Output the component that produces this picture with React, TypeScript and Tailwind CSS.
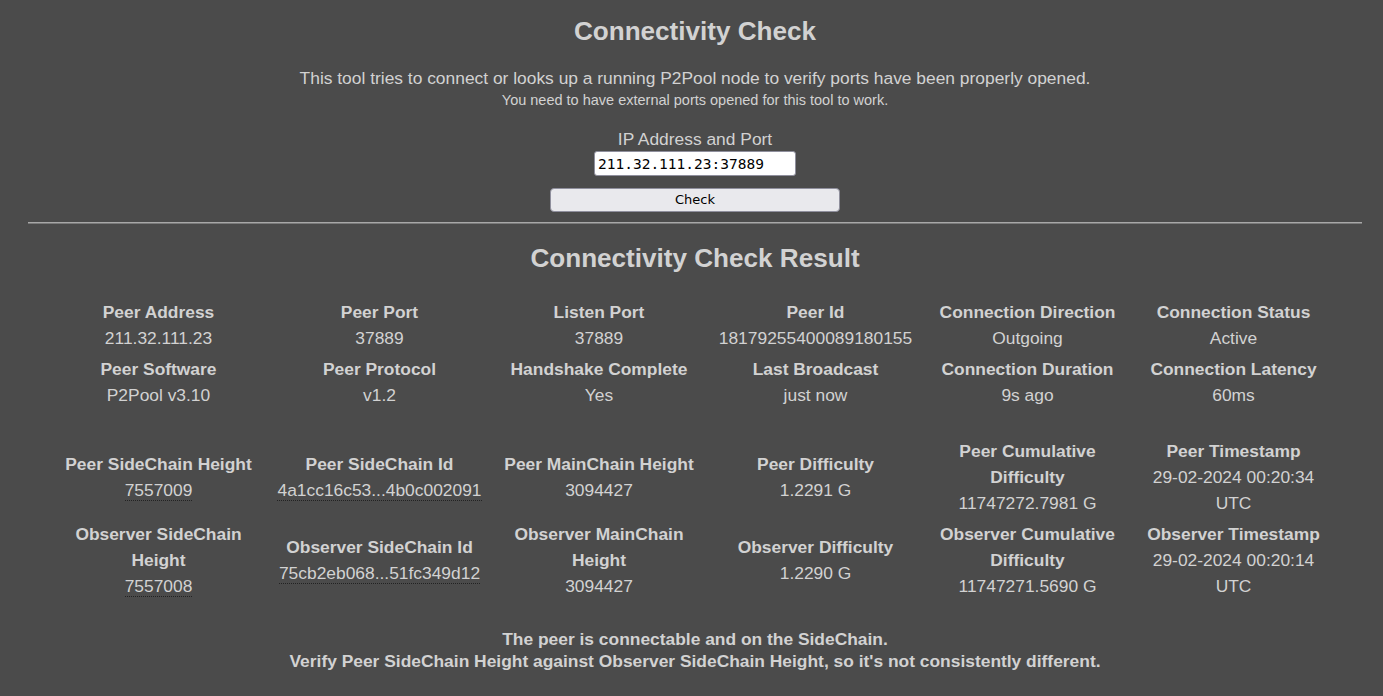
import React from "react";

type Cell = { label: string; value: string; dotted?: boolean };

const rows: Cell[][] = [
  [
    { label: "Peer Address", value: "211.32.111.23" },
    { label: "Peer Port", value: "37889" },
    { label: "Listen Port", value: "37889" },
    { label: "Peer Id", value: "18179255400089180155" },
    { label: "Connection Direction", value: "Outgoing" },
    { label: "Connection Status", value: "Active" },
  ],
  [
    { label: "Peer Software", value: "P2Pool v3.10" },
    { label: "Peer Protocol", value: "v1.2" },
    { label: "Handshake Complete", value: "Yes" },
    { label: "Last Broadcast", value: "just now" },
    { label: "Connection Duration", value: "9s ago" },
    { label: "Connection Latency", value: "60ms" },
  ],
  [
    { label: "Peer SideChain Height", value: "7557009", dotted: true },
    { label: "Peer SideChain Id", value: "4a1cc16c53...4b0c002091", dotted: true },
    { label: "Peer MainChain Height", value: "3094427" },
    { label: "Peer Difficulty", value: "1.2291 G" },
    { label: "Peer Cumulative Difficulty", value: "11747272.7981 G" },
    { label: "Peer Timestamp", value: "29-02-2024 00:20:34 UTC" },
  ],
  [
    { label: "Observer SideChain Height", value: "7557008", dotted: true },
    { label: "Observer SideChain Id", value: "75cb2eb068...51fc349d12", dotted: true },
    { label: "Observer MainChain Height", value: "3094427" },
    { label: "Observer Difficulty", value: "1.2290 G" },
    { label: "Observer Cumulative Difficulty", value: "11747271.5690 G" },
    { label: "Observer Timestamp", value: "29-02-2024 00:20:14 UTC" },
  ],
];

function CellView({ c }: { c: Cell }) {
  return (
    <div className="flex flex-col justify-center items-center text-center px-1 leading-[26px]">
      <div className="font-bold">{c.label}</div>
      <div>
        {c.dotted ? (
          <span className="border-b border-dotted border-[#222222]">{c.value}</span>
        ) : (
          c.value
        )}
      </div>
    </div>
  );
}

export default function App() {
  return (
    <div
      className="min-h-[696px] bg-[#4b4b4b] text-[#d2d2d2] text-[17.4px] overflow-hidden"
      style={{ fontFamily: '"Liberation Sans", Arial, sans-serif' }}
    >
      <div className="ml-[28px] mr-[21px]">
        <h1 className="pt-[16px] text-center font-bold text-[26.1px] leading-[30px]">
          Connectivity Check
        </h1>
        <p className="mt-[21px] text-center leading-[22px]">
          This tool tries to connect or looks up a running P2Pool node to verify ports have been properly opened.
        </p>
        <p className="text-center text-[14.5px] leading-[22px]">
          You need to have external ports opened for this tool to work.
        </p>
        <div className="mt-[17px] flex flex-col items-center">
          <label className="leading-[22px]">IP Address and Port</label>
          <input
            readOnly
            value="211.32.111.23:37889"
            className="mt-[1px] w-[202px] h-[25px] bg-white border border-[#8f8f9d] rounded-[3px] pl-[3px] text-black text-[14.5px] outline-none"
            style={{ fontFamily: '"DejaVu Sans Mono", "Liberation Mono", monospace' }}
          />
          <button
            className="mt-[12px] w-[290px] h-[24px] bg-[#e9e9ed] border border-[#8f8f9d] rounded-[4px] text-black text-[13px] leading-[20px]"
            style={{ fontFamily: '"DejaVu Sans", sans-serif' }}
          >
            Check
          </button>
        </div>
        <div className="mt-[10px] h-[2px] border-t border-[#a8a8a8] border-b-[1px] border-b-[#7a7a7a]" />
        <h2 className="mt-[19px] text-center font-bold text-[26.1px] leading-[30px]">
          Connectivity Check Result
        </h2>
      </div>
      <div className="mt-[26px] mx-auto w-[1287px] grid grid-cols-[221px_221px_218px_215px_209px_203px] gap-y-[5px]">
        {rows.slice(0, 2).flat().map((c, i) => (
          <CellView key={"a" + i} c={c} />
        ))}
        <div className="col-span-6 h-[20px]" />
        {rows.slice(2).flat().map((c, i) => (
          <CellView key={"b" + i} c={c} />
        ))}
      </div>
      <div className="ml-[28px] mr-[21px] mt-[29px] text-center font-bold leading-[22px]">
        <div>The peer is connectable and on the SideChain.</div>
        <div>Verify Peer SideChain Height against Observer SideChain Height, so it's not consistently different.</div>
      </div>
    </div>
  );
}
